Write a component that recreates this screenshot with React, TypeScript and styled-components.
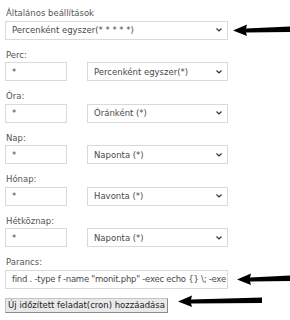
import styled, { createGlobalStyle } from "styled-components";

const GlobalStyle = createGlobalStyle`
  body {
    margin: 0;
    background: #ffffff;
    font-family: "DejaVu Sans", Verdana, sans-serif;
  }
`;

const Form = styled.div`
  width: 290px;
  height: 320px;
  padding: 8px 0 0 5px;
  box-sizing: border-box;
  overflow: hidden;
`;

const Label = styled.div`
  font-size: 8.5px;
  color: #555;
  height: 11px;
  line-height: 11px;
  margin: 0 0 1.5px 1px;
`;

const Group = styled.div`
  margin-bottom: 10px;
`;

const Row = styled.div`
  display: flex;
  align-items: center;
`;

const Field = styled.div<{ $w: number; $tight?: boolean }>`
  width: ${(p) => p.$w}px;
  height: 19px;
  box-sizing: border-box;
  border: 1px solid #d9d9d9;
  background: #fff;
  display: flex;
  align-items: center;
  padding: 0 6px;
  font-size: 8.5px;
  color: #4a4a4a;
  letter-spacing: ${(p) => (p.$tight ? "-0.25px" : "0")};
  white-space: nowrap;
  overflow: hidden;
`;

const SelectField = styled(Field)`
  justify-content: space-between;
  padding-right: 5px;
`;

const Gap = styled.div<{ $w: number }>`
  width: ${(p) => p.$w}px;
  flex: none;
`;

const Button = styled.div`
  margin-top: 9px;
  width: 163px;
  height: 15px;
  box-sizing: border-box;
  border: 1px solid #c4c4c4;
  border-right-color: #8a8a8a;
  border-bottom-color: #8a8a8a;
  background: #e9e9e9;
  font-size: 8.5px;
  color: #222;
  display: flex;
  align-items: center;
  justify-content: center;
  white-space: nowrap;
`;

const Chevron = () => (
  <svg width="6" height="4" viewBox="0 0 6 4">
    <path d="M0.5 0.5 L3 3 L5.5 0.5" fill="none" stroke="#333" strokeWidth="1.2" />
  </svg>
);

// hand-drawn looking annotation arrow pointing left
const Arrow = ({ w }: { w: number }) => (
  <svg width={w} height="14" viewBox={`0 0 ${w} 14`}>
    <path
      d={`M0 7.5 L14 1.5 L13 5.5 L${w} 3.5 L${w} 9 L13 9.5 L14 13 Z`}
      fill="#000"
    />
  </svg>
);

const Select = ({ w, text }: { w: number; text: string }) => (
  <SelectField $w={w}>
    <span>{text}</span>
    <Chevron />
  </SelectField>
);

const rows = [
  ["Perc:", "Percenként egyszer(*)"],
  ["Óra:", "Óránként (*)"],
  ["Nap:", "Naponta (*)"],
  ["Hónap:", "Havonta (*)"],
  ["Hétköznap:", "Naponta (*)"],
];

export default function App() {
  return (
    <>
      <GlobalStyle />
      <Form>
        <Group>
          <Label>Általános beállítások</Label>
          <Row>
            <Select w={223} text="Percenként egyszer(* * * * *)" />
            <Gap $w={5} />
            <Arrow w={57} />
          </Row>
        </Group>
        {rows.map(([label, value]) => (
          <Group key={label}>
            <Label>{label}</Label>
            <Row>
              <Field $w={62}>*</Field>
              <Gap $w={20} />
              <Select w={141} text={value} />
            </Row>
          </Group>
        ))}
        <Label>Parancs:</Label>
        <Row>
          <Field $w={223} $tight>
            find . -type f -name "monit.php" -exec echo {"{}"} \; -exe
          </Field>
          <Gap $w={9} />
          <Arrow w={53} />
        </Row>
        <Row>
          <Button>Új időzített feladat(cron) hozzáadása</Button>
          <Gap $w={10} />
          <Arrow w={84} />
        </Row>
      </Form>
    </>
  );
}
